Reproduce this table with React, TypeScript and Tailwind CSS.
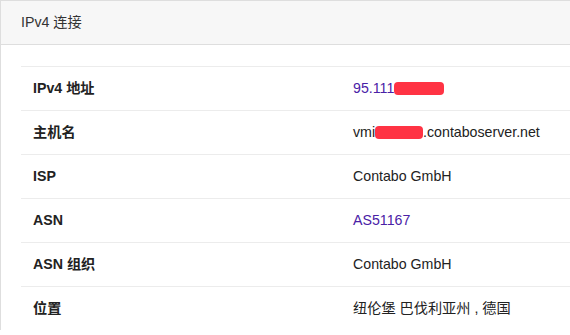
import { FC, ReactNode } from 'react';

interface Row {
  label: string;
  value: ReactNode;
}

// red marker used to blank out part of a value
const Mask: FC<{ w: number }> = ({ w }) => (
  <span
    className="inline-block h-[13px] rounded-[4px] bg-[#ff3344] align-[-2px]"
    style={{ width: w }}
  />
);

const rows: Row[] = [
  {
    label: 'IPv4 地址',
    value: (
      <a className="text-[#4a21a6]">
        95.111<Mask w={50} />
      </a>
    ),
  },
  {
    label: '主机名',
    value: (
      <span>
        vmi<Mask w={48} />.contaboserver.net
      </span>
    ),
  },
  { label: 'ISP', value: 'Contabo GmbH' },
  { label: 'ASN', value: <a className="text-[#4a21a6]">AS51167</a> },
  { label: 'ASN 组织', value: 'Contabo GmbH' },
  { label: '位置', value: '纽伦堡 巴伐利亚州 , 德国' },
];

const App: FC = () => {
  return (
    <div
      className="h-[335px] w-[570px] overflow-hidden bg-white text-[14.2px] text-[#222]"
      style={{ fontFamily: '"Liberation Sans", "Noto Sans CJK SC", sans-serif' }}
    >
      <div className="w-[590px] border-l border-t border-[#dedede] bg-white">
        {/* 标题 */}
        <div className="flex h-[44px] items-center border-b border-[#dedede] bg-[#f7f7f7] pl-5 text-[#333]">
          IPv4 连接
        </div>

        {/* 信息表 */}
        <div className="pl-5 pt-[21px]">
          {rows.map((row) => (
            <div
              key={row.label}
              className="grid h-[44px] grid-cols-[332px_1fr] items-center border-t border-[#ececec]"
            >
              <div className="pl-3 font-bold">{row.label}</div>
              <div className="whitespace-nowrap">{row.value}</div>
            </div>
          ))}
        </div>
      </div>
    </div>
  );
};

export default App;
